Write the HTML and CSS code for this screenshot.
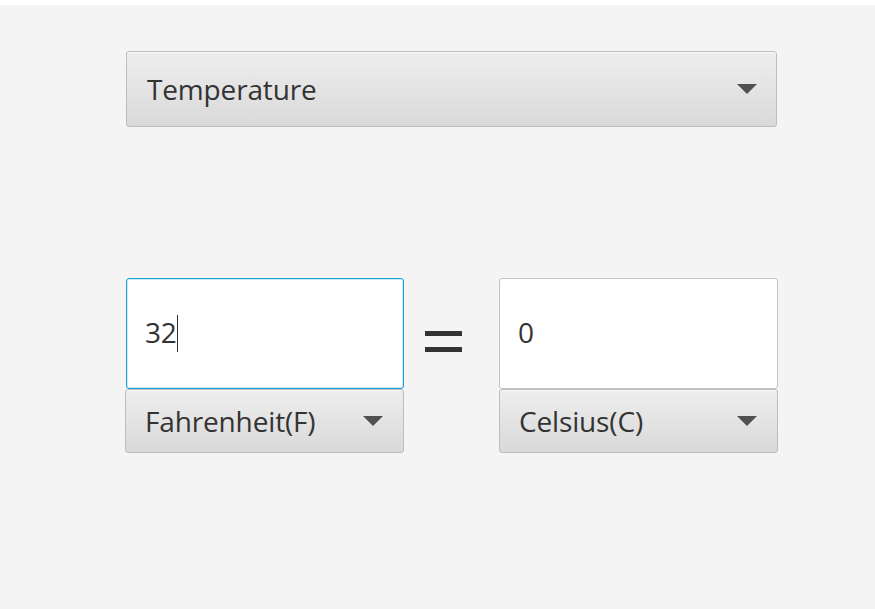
FILE: index.html
```html
<!DOCTYPE html>
<html>
<head>
<meta charset="utf-8">
<link rel="stylesheet" href="styles.css">
</head>
<body>
<div class="strip"></div>
<main class="panel">
  <div class="combo combo-main">
    <span class="label">Temperature</span>
    <span class="arrow"></span>
  </div>
  <div class="row">
    <div class="col col-left">
      <div class="field focused"><span class="value">32</span><span class="caret"></span></div>
      <div class="combo combo-unit combo-unit-left">
        <span class="label">Fahrenheit(F)</span>
        <span class="arrow"></span>
      </div>
    </div>
    <div class="equals"><span class="bar"></span><span class="bar"></span></div>
    <div class="col">
      <div class="field"><span class="value">0</span></div>
      <div class="combo combo-unit">
        <span class="label">Celsius(C)</span>
        <span class="arrow"></span>
      </div>
    </div>
  </div>
</main>
</body>
</html>
```
FILE: styles.css
```css
html, body {
  margin: 0;
  padding: 0;
  background: #f4f4f4;
  font-family: "Open Sans", "Noto Sans", sans-serif;
  color: #333333;
}
.strip {
  height: 5px;
  background: #ffffff;
}
.panel {
  height: 604px;
  box-sizing: border-box;
  padding: 46px 0 0 126px;
}
.combo {
  box-sizing: border-box;
  display: flex;
  align-items: center;
  justify-content: space-between;
  border: 1px solid #bdbdbd;
  border-radius: 3px;
  background: linear-gradient(#eeeeee, #d9d9d9);
  box-shadow: inset 0 1px 0 #f8f8f8;
}
.combo-main {
  width: 651px;
  height: 76px;
  padding: 0 19px 0 20px;
}
.label {
  font-size: 28px;
  letter-spacing: -0.15px;
  line-height: 1;
  margin-top: -1px;
}
.arrow {
  width: 0;
  height: 0;
  border-left: 10px solid transparent;
  border-right: 10px solid transparent;
  border-top: 10px solid #505050;
}
.row {
  display: flex;
  margin-top: 151px;
}
.col {
  display: flex;
  flex-direction: column;
  width: 279px;
}
.col-left {
  width: 278px;
}
.field {
  box-sizing: border-box;
  height: 111px;
  background: #ffffff;
  border: 1px solid #c4c4c4;
  border-radius: 3px;
  display: flex;
  align-items: center;
  padding-left: 18px;
}
.field.focused {
  border-color: #1ea1d4;
  box-shadow: inset 0 0 0 1px #c4e9f7;
}
.value {
  font-size: 28px;
  letter-spacing: -0.3px;
  line-height: 1;
  margin-top: -3px;
}
.caret {
  width: 1px;
  height: 37px;
  background: #333333;
  margin-left: 1px;
}
.combo-unit {
  height: 64px;
  padding: 0 20px 0 19px;
}
.combo-unit-left {
  margin-left: -1px;
  width: 279px;
}
.equals {
  width: 95px;
  display: flex;
  flex-direction: column;
  align-items: flex-start;
  padding: 53px 0 0 21px;
  gap: 11px;
  box-sizing: border-box;
  height: 111px;
}
.bar {
  width: 37px;
  height: 5px;
  background: #333333;
}
```
